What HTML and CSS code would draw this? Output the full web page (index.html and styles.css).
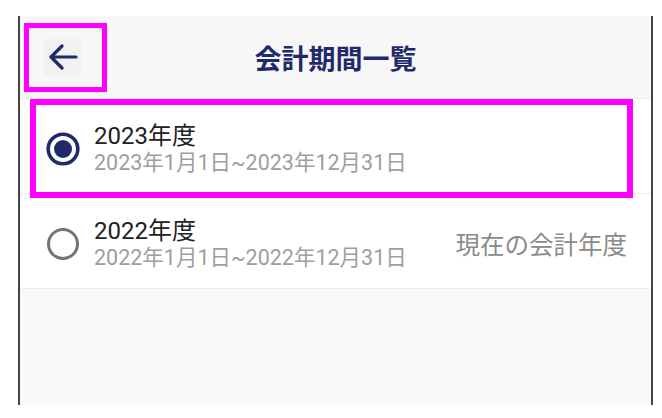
FILE: index.html
```html
<!DOCTYPE html>
<html lang="ja">
  <head>
    <meta charset="utf-8">
    <title>会計期間一覧</title>
    <link rel="stylesheet" href="styles.css">
  </head>
  <body>
    <div class="screen">
      <div class="appbar">
        <button class="back" aria-label="戻る">
          <svg viewBox="0 0 30 26" width="30" height="26">
            <path d="M3 13 H28 M14 2 L3 13 L14 24" fill="none" stroke="#1f2a6b" stroke-width="3.2" stroke-linecap="round" stroke-linejoin="round"/>
          </svg>
        </button>
        <h1 class="title">会計期間一覧</h1>
        <div></div>
      </div>

      <ul class="periods">
        <li class="period">
          <svg class="radio" viewBox="0 0 34 34" width="34" height="34">
            <circle cx="17" cy="17" r="14.8" fill="none" stroke="#1f2a6b" stroke-width="3.6"/>
            <circle cx="17" cy="17" r="9" fill="#1f2a6b"/>
          </svg>
          <div class="text">
            <div class="name">2023年度</div>
            <div class="range">2023年1月1日~2023年12月31日</div>
          </div>
        </li>
        <li class="period">
          <svg class="radio" viewBox="0 0 34 34" width="34" height="34">
            <circle cx="17" cy="17" r="14.5" fill="none" stroke="#757575" stroke-width="3"/>
          </svg>
          <div class="text">
            <div class="name">2022年度</div>
            <div class="range">2022年1月1日~2022年12月31日</div>
          </div>
          <div class="current">現在の会計年度</div>
        </li>
      </ul>

      <!-- highlight frames -->
      <div class="mark mark-back"></div>
      <div class="mark mark-row"></div>
    </div>
  </body>
</html>
```

FILE: styles.css
```css
body {
  margin: 0;
  background: #fff;
  font-family: Roboto, "Noto Sans CJK JP", sans-serif;
}

.screen {
  position: relative;
  margin: 16px 0 0 18px;
  width: 631px;
  height: 389px;
  border-left: 2px solid #454545;
  border-right: 2px solid #454545;
  background: #f9f9f9;
}

.appbar {
  display: grid;
  grid-template-columns: 1fr auto 1fr;
  align-items: center;
  height: 82px;
  padding: 0 24px;
  background: #f7f7f7;
  border-bottom: 1px solid #ebebeb;
}

.back {
  display: flex;
  align-items: center;
  justify-content: center;
  width: 37px;
  height: 37px;
  padding: 0;
  border: none;
  background: #f1f1f1;
}

.title {
  margin: 0;
  font-size: 27px;
  font-weight: bold;
  color: #1f2a6b;
}

.periods {
  margin: 0;
  padding: 0;
  list-style: none;
}

.period {
  display: flex;
  align-items: center;
  box-sizing: border-box;
  height: 95px;
  padding: 5px 24px 0 26px;
  background: #fff;
  border-bottom: 1px solid #eeeeee;
}

.radio {
  flex: none;
}

.text {
  flex: 1;
  margin-left: 14px;
}

.name {
  font-size: 24px;
  line-height: 27px;
  color: #212121;
}

.range {
  font-size: 21.5px;
  line-height: 25px;
  color: #9e9e9e;
}

.current {
  font-size: 24.5px;
  color: #8a8a8a;
}

.mark {
  position: absolute;
  border: 5px solid #ff00ff;
}

.mark-back {
  left: 4px;
  top: 7px;
  width: 73px;
  height: 59px;
}

.mark-row {
  left: 10px;
  top: 83px;
  width: 591px;
  height: 87px;
  border-width: 6px;
}
```
